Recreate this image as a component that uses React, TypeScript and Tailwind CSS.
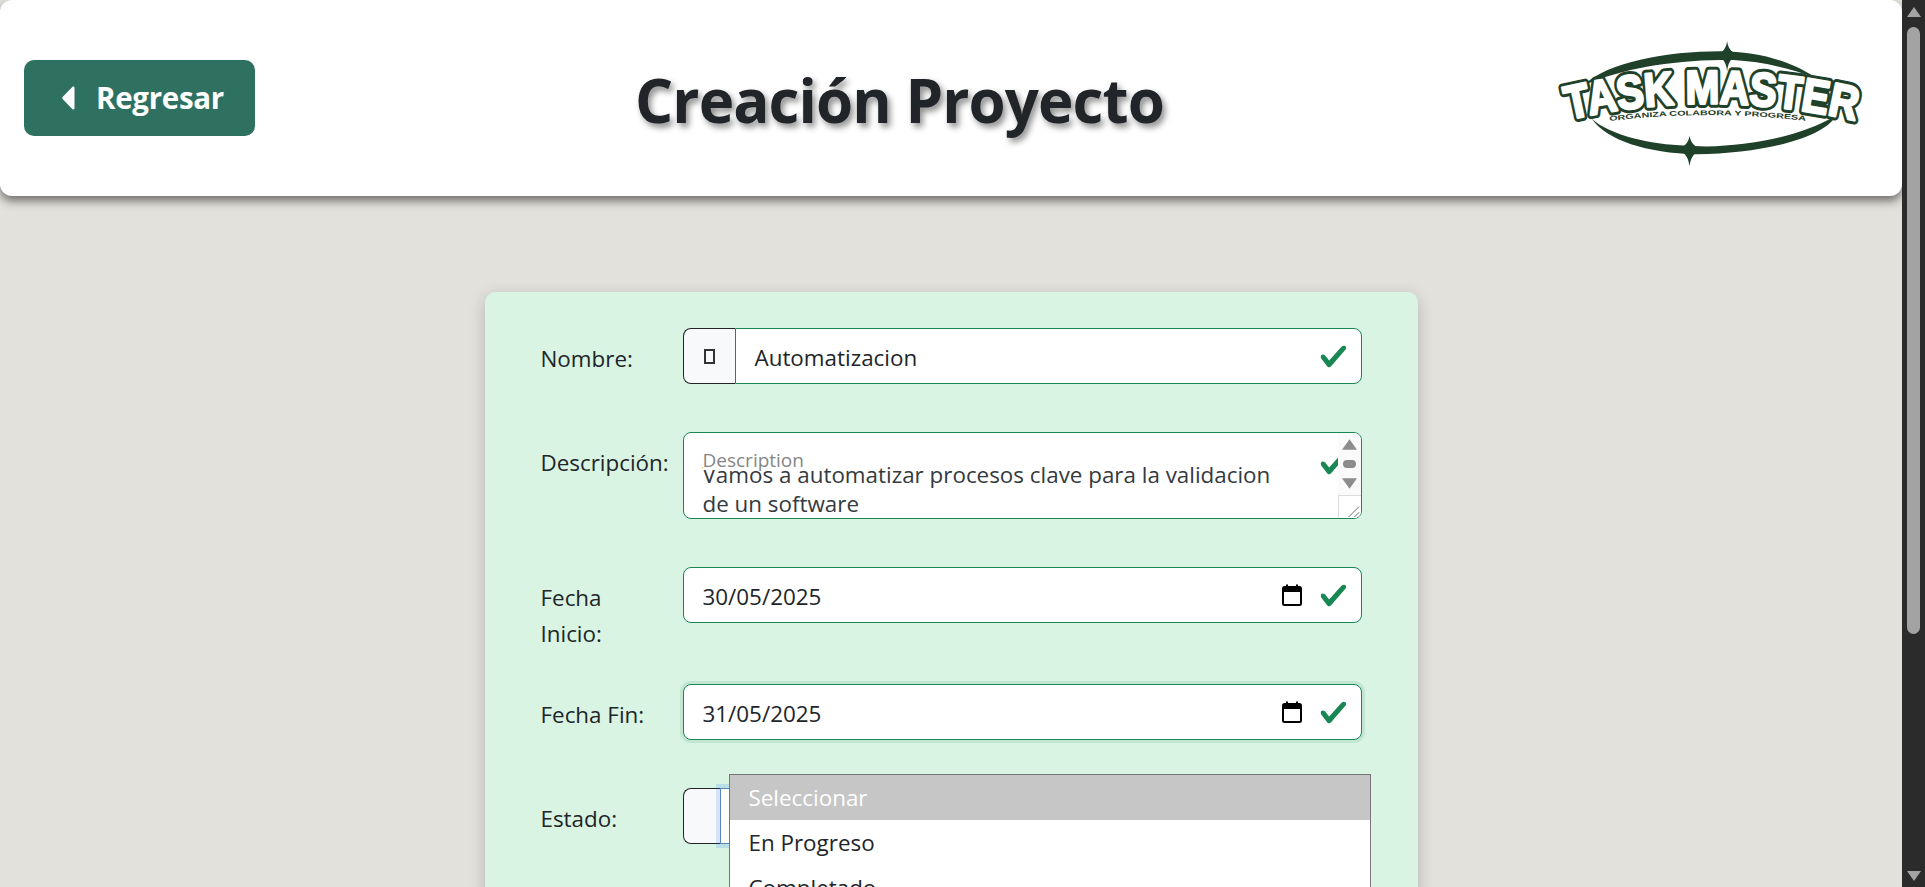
const checkPath = 'M2.3 6.73.6 4.53c-.4-1.04.46-1.4 1.1-.8l1.1 1.4 3.4-3.8c.6-.63 1.6-.27 1.2.7l-4 4.6c-.43.5-.8.4-1.1.1z'

function Check({ className }: { className: string }) {
  return (
    <svg viewBox="0 0 8 8" className={className}>
      <path d={checkPath} fill="#198754" />
    </svg>
  )
}

function CalendarIcon() {
  return (
    <svg viewBox="0 0 20 22" className="h-[22px] w-5 shrink-0">
      <rect x="1" y="3" width="18" height="18" rx="1.5" fill="none" stroke="#000" strokeWidth="2" />
      <rect x="1" y="3" width="18" height="5" fill="#000" />
      <rect x="4" y="0.5" width="2" height="3" fill="#000" />
      <rect x="14" y="0.5" width="2" height="3" fill="#000" />
    </svg>
  )
}

function Logo() {
  return (
    <svg viewBox="100 28 950 412" className="h-[137px] w-[317px] shrink-0">
      <defs>
        <path id="logo-arc" d="M 145 298 Q 575 198 1022 304" />
        <path id="logo-sub" d="M 268 302 Q 565 266 862 302" />
      </defs>
      <path d="M 190 195 C 260 125 440 92 600 92 C 720 92 820 125 885 170 C 800 140 720 122 640 118 L 600 118 C 450 120 300 145 190 195 Z" fill="#1f4029" />
      <path d="M 622 62 C 626 90 640 98 662 102 C 640 108 626 118 622 152 C 618 118 604 108 582 102 C 604 98 618 90 622 62 Z" fill="#1f4029" />
      <path d="M 215 295 C 270 345 390 372 500 376 L 560 378 C 700 375 850 345 950 285 C 910 355 730 398 530 402 C 380 398 260 360 215 295 Z" fill="#1f4029" />
      <path d="M 509 346 C 513 370 526 380 550 388 C 526 394 513 406 509 438 C 505 406 492 394 468 388 C 492 380 505 370 509 346 Z" fill="#1f4029" />
      <text fontFamily="'Liberation Sans', sans-serif" fontWeight="700" fontSize="142" fill="#fff" stroke="#1f4029" strokeWidth="26" strokeLinejoin="round">
        <textPath href="#logo-arc" textLength="870" lengthAdjust="spacingAndGlyphs">TASK MASTER</textPath>
      </text>
      <text fontFamily="'Liberation Sans', sans-serif" fontWeight="700" fontSize="142" fill="#fff" stroke="#fff" strokeWidth="8" strokeLinejoin="round">
        <textPath href="#logo-arc" textLength="870" lengthAdjust="spacingAndGlyphs">TASK MASTER</textPath>
      </text>
      <text fontFamily="'Liberation Sans', sans-serif" fontWeight="700" fontSize="21" fill="#1f4029">
        <textPath href="#logo-sub" textLength="592" lengthAdjust="spacingAndGlyphs">ORGANIZA COLABORA Y PROGRESA</textPath>
      </text>
    </svg>
  )
}

function Field({ label, mb, children }: { label: React.ReactNode; mb: string; children: React.ReactNode }) {
  return (
    <div className={`flex items-start ${mb}`}>
      <label className="w-[142px] shrink-0 pt-[13px] text-[22.4px] leading-9 text-[#212529]">{label}</label>
      <div className="relative min-w-0 flex-1">{children}</div>
    </div>
  )
}

function DateInput({ value, glow }: { value: string; glow?: boolean }) {
  return (
    <div className={`flex h-14 items-center rounded-lg border border-[#198754] bg-white pr-[13px] pl-[19px] ${glow ? 'shadow-[0_0_0_3px_rgba(25,135,84,0.12)]' : ''}`}>
      <span className="flex-1 pt-[3px] text-[22.4px] text-[#212529]">{value}</span>
      <CalendarIcon />
      <Check className="ml-[17px] h-[29px] w-[29px]" />
    </div>
  )
}

export default function App() {
  return (
    <div className="flex h-screen overflow-hidden bg-[#e2e1dc] font-['Open_Sans','Noto_Sans',sans-serif]">
      <div className="min-w-0 flex-1">
        <header className="flex h-[196px] items-center rounded-xl bg-white pr-8 pl-6 shadow-[0_5px_10px_rgba(0,0,0,0.5)]">
          <button type="button" className="flex h-[76px] w-[231px] shrink-0 items-center gap-5 rounded-[10px] bg-[#2f7161] pl-[37px] text-[29.5px] font-bold tracking-[-0.01em] text-white">
            <svg viewBox="0 0 12 22" className="h-6 w-[15px]">
              <path d="M11.5 1.5v19c0 1-1 1.4-1.8.7L.8 12.2a1.7 1.7 0 0 1 0-2.4L9.7.8c.8-.7 1.8-.3 1.8.7z" fill="#fff" />
            </svg>
            Regresar
          </button>
          <h1 className="ml-[380px] pt-[3px] text-[60px] font-bold tracking-[-0.015em] whitespace-nowrap text-[#212529] [text-shadow:3px_4px_6px_rgba(0,0,0,0.45)]">
            Creación Proyecto
          </h1>
          <div className="ml-auto">
            <Logo />
          </div>
        </header>

        <main className="mx-auto mt-24 w-[933px] rounded-[10px] bg-[#d9f4e3] px-14 pt-9 pb-10 shadow-[0_4px_16px_rgba(0,0,0,0.2)]">
          <Field label="Nombre:" mb="mb-12">
            <div className="flex h-14">
              <div className="flex w-[52px] items-center justify-center rounded-l-lg border border-r-0 border-[#212529] bg-[#f8f9fa]">
                <div className="h-[15px] w-[11px] border-2 border-[#333]" />
              </div>
              <div className="flex flex-1 items-center rounded-r-lg border border-[#198754] bg-white pr-[13px] pl-[19px]">
                <span className="flex-1 pt-[3px] text-[22.4px] text-[#212529]">Automatizacion</span>
                <Check className="h-[29px] w-[29px]" />
              </div>
            </div>
          </Field>

          <Field label="Descripción:" mb="mb-12">
            <div className="relative h-[87px] overflow-hidden rounded-lg border border-[#198754] bg-white">
              <div className="w-[606px] pt-[27px] pl-[19px] text-[22.4px] leading-[29px] text-[#343a40]">
                Vamos a automatizar procesos clave para la validacion de un software
              </div>
              <div className="absolute top-0 left-[19px] h-[37px] w-[110px] bg-white pt-[15px] text-[19px] leading-[24px] text-[#868686]">Description</div>
              <Check className="absolute top-[16px] right-[13px] h-[29px] w-[29px]" />
              <div className="absolute top-0 right-0 flex h-full w-[23px] flex-col items-center bg-[#fafafa]">
                <svg viewBox="0 0 14 10" className="mt-[6px] h-[11px] w-[15px]"><path d="M7 0l7 10H0z" fill="#8c8c8c" /></svg>
                <div className="mt-[10px] h-2 w-[13px] rounded-full bg-[#8c8c8c]" />
                <svg viewBox="0 0 14 10" className="mt-[10px] h-[11px] w-[15px]"><path d="M7 10L0 0h14z" fill="#8c8c8c" /></svg>
                <div className="relative mt-auto h-[23px] w-[23px] border-t border-l border-[#dcdcdc] bg-white">
                  <svg viewBox="0 0 23 23" className="absolute inset-0 h-full w-full"><path d="M10 22L21 11M16 22l5-5" stroke="#666" strokeWidth="1" fill="none" /></svg>
                </div>
              </div>
            </div>
          </Field>

          <Field label={<>Fecha<br />Inicio:</>} mb="mb-8">
            <DateInput value="30/05/2025" />
          </Field>

          <Field label="Fecha Fin:" mb="mb-12">
            <DateInput value="31/05/2025" glow />
          </Field>

          <Field label="Estado:" mb="mb-12">
            <div className="flex h-14">
              <div className="w-[37px] rounded-l-lg border border-r-0 border-[#212529] bg-[#f8f9fa]" />
              <div className="flex-1 border border-[#5b85bd] bg-white shadow-[0_0_0_4px_rgba(13,110,253,0.15)]" />
            </div>
            <ul className="absolute top-[-14px] left-[46px] w-[642px] border border-[#767676] bg-white text-[22.4px] text-[#212529]">
              <li className="flex h-[45px] items-center bg-[#c6c6c6] pl-[19px] text-white">Seleccionar</li>
              <li className="flex h-[45px] items-center pl-[19px]">En Progreso</li>
              <li className="flex h-[45px] items-center pl-[19px]">Completado</li>
            </ul>
          </Field>
        </main>
      </div>

      <div className="relative flex w-[23px] shrink-0 flex-col items-center bg-[#2b2b2b]">
        <svg viewBox="0 0 14 10" className="mt-[7px] h-[10px] w-[14px]"><path d="M7 0l7 10H0z" fill="#a3a3a3" /></svg>
        <div className="mt-[10px] h-[607px] w-[13px] rounded-full bg-[#a3a3a3]" />
        <svg viewBox="0 0 14 10" className="mt-auto mb-[6px] h-[10px] w-[14px]"><path d="M7 10L0 0h14z" fill="#a3a3a3" /></svg>
      </div>
    </div>
  )
}
